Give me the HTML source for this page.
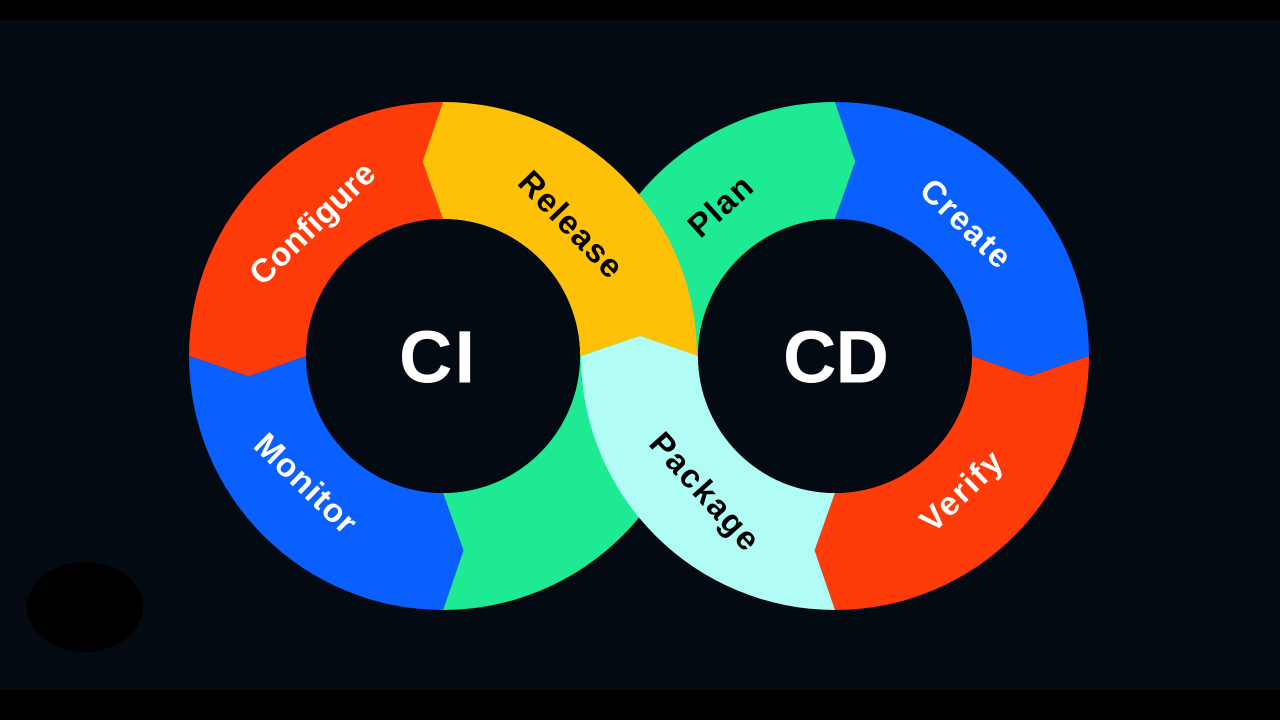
<!DOCTYPE html>
<html><head><meta charset="utf-8"><style>
html,body{margin:0;padding:0;background:#000;}
svg{display:block}
</style></head><body>
<svg width="1280" height="720" viewBox="0 0 1280 720" xmlns="http://www.w3.org/2000/svg">
<rect x="0" y="0" width="1280" height="720" fill="#000"/>
<rect x="0" y="20" width="1280" height="670" fill="#030a12"/>
<ellipse cx="85" cy="607" rx="58" ry="45" fill="#000"/>
<path d="M443,610 A254,254 0 0 0 697,356 L580,356 A137,137 0 0 1 443,493 L463.4,550.4 Z" fill="#1eea93"/>
<path d="M581,356 A254,254 0 0 1 835,102 L855.4,161.6 L835,219 A137,137 0 0 0 698,356 Z" fill="#1eea93"/>
<path d="M443,102 A254,254 0 0 0 189,356 L248.6,376.4 L306,356 A137,137 0 0 1 443,219 L422.6,161.6 Z" fill="#ff3b0a"/>
<path d="M189,356 A254,254 0 0 0 443,610 L463.4,550.4 L443,493 A137,137 0 0 1 306,356 L248.6,376.4 Z" fill="#0a5fff"/>
<path d="M835,102 A254,254 0 0 1 1089,356 L1029.4,376.4 L972,356 A137,137 0 0 0 835,219 L855.4,161.6 Z" fill="#0a5fff"/>
<path d="M1089,356 A254,254 0 0 1 835,610 L814.6,550.4 L835,493 A137,137 0 0 0 972,356 L1029.4,376.4 Z" fill="#ff3b0a"/>
<path d="M697,356 A254,254 0 0 0 443,102 L422.6,161.6 L443,219 A137,137 0 0 1 580,356 L640,336 Z" fill="#ffc107"/>
<path d="M835,610 A254,254 0 0 1 581,356 L640,336 L698,356 A137,137 0 0 0 835,493 L814.6,550.4 Z" fill="#b2fcf6"/>
<circle cx="443" cy="356" r="137" fill="#030a12"/>
<circle cx="835" cy="356" r="137" fill="#030a12"/>
<g font-family="Liberation Sans, sans-serif" font-weight="bold" text-anchor="middle" dominant-baseline="central">
<text x="437" y="357" font-size="74" fill="#fff" textLength="76">CI</text>
<text x="836" y="357" font-size="74" fill="#fff" textLength="106">CD</text>
<text transform="translate(312,223) rotate(-44)" font-size="33" fill="#fff" textLength="160">Configure</text>
<text transform="translate(571,224) rotate(46)" font-size="33" fill="#000" textLength="134">Release</text>
<text transform="translate(720,206) rotate(-42)" font-size="33" fill="#000" textLength="74">Plan</text>
<text transform="translate(966,223) rotate(44)" font-size="33" fill="#fff" textLength="112">Create</text>
<text transform="translate(306,483) rotate(44)" font-size="33" fill="#fff" textLength="128">Monitor</text>
<text transform="translate(705,491) rotate(48)" font-size="33" fill="#000" textLength="146">Package</text>
<text transform="translate(961,491) rotate(-44)" font-size="33" fill="#fff" textLength="100">Verify</text>
</g>
</svg>
</body></html>
